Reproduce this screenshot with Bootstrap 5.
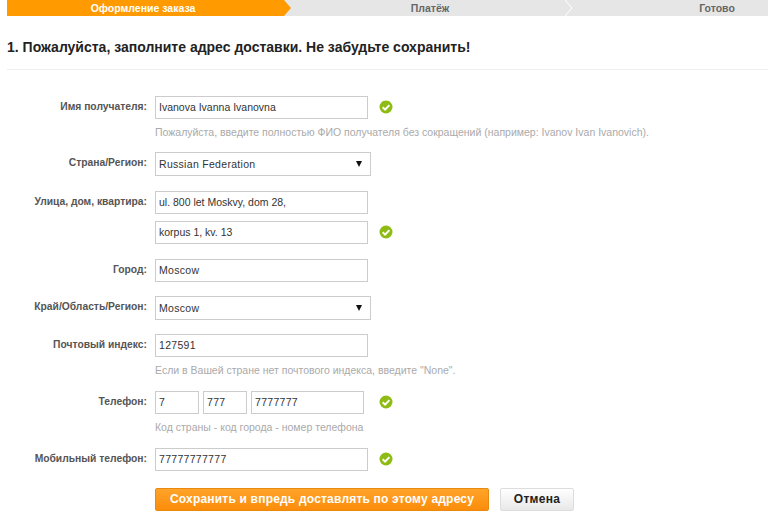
<!DOCTYPE html>
<html lang="ru"><head><meta charset="utf-8"><title>Оформление заказа</title>
<link href="https://cdn.jsdelivr.net/npm/bootstrap@5.3.0/dist/css/bootstrap.min.css" rel="stylesheet">
<style>
html,body{height:521px;overflow:hidden}
body{font-family:"Liberation Sans",Arial,sans-serif;font-size:10.300px;color:#333;background:#fff}
.steps{margin-left:7px;height:16px;background:#e6e6e6;color:#666;font-weight:700;font-size:10.500px;line-height:16px}
.step{position:relative;text-align:center}
.step-a{width:276px;background:#ff9a00;color:#fff;padding-right:4px}
.step-a svg{position:absolute;left:100%;top:0}
.step-b{width:289px;padding-left:5px}
.step-c{flex:1;padding-left:94px}
.step-sep{position:absolute;top:0;left:281px}
.title{margin:17px 0 0 7px;font-size:14px;font-weight:700;line-height:28px;color:#222}
.rule{margin:8px 0 26px 7px;border-top:1px solid #eee}
.frow{margin-bottom:14px}
.frow.wide{margin-bottom:15px}
.frow.tight{margin-bottom:7px}
.flabel{width:147px;margin:-2px 8px 0 0;text-align:right;font-weight:700;color:#555;line-height:22px;flex:none}
.finput.form-control,.fselect.form-select{height:23px;border:1px solid #ccc;border-radius:0;padding:0 3px;font-size:10.500px;color:#333;box-shadow:none;letter-spacing:.3px}
.finput.form-control{width:213px;padding-bottom:1px}
.finput.form-control.snug{letter-spacing:0}
.fselect.form-select{width:216px;height:24px;padding-top:1px;background-image:url("data:image/svg+xml,%3Csvg xmlns='http://www.w3.org/2000/svg' width='6' height='6'%3E%3Cpath d='M0 0h6L3 6z' fill='%23111'/%3E%3C/svg%3E");background-size:6px 6px;background-position:right 8px center;padding-right:14px}
.w1.form-control{width:44px}
.w3.form-control{width:113px}
.okmark{margin:-2px 0 0 11px;flex:none}
.okmark.near{margin-left:15px}
.hint{margin:7px 0 0 155px;color:#aaa;line-height:13px;font-size:10.500px}
.hintrow{margin-bottom:14px}
.hintrow.first{margin-bottom:13px}
.btn-save{width:334px;height:23px;padding:0;border:1px solid #e98a10;border-radius:2px;background:linear-gradient(#ffa42a,#fc8c0a);color:#fff;font-size:12px;font-weight:700;letter-spacing:.2px;line-height:21px}
.btn-cancel{width:74px;height:23px;padding:0;margin-left:11px;border:1px solid #ddd;border-radius:2px;background:linear-gradient(#fff,#e8e8e8);color:#222;font-size:12px;font-weight:700;letter-spacing:.3px;line-height:21px}
.actions{margin-left:155px;margin-top:17px}
.gap4{gap:4px}
</style></head><body>
<svg width="0" height="0" class="position-absolute"><defs><g id="ok"><circle cx="7" cy="7" r="6.500" fill="#8fbc14"/><path d="M3.700 7.200l2.400 2.400 4.300-4.500" fill="none" stroke="#fff" stroke-width="2"/></g></defs></svg>
<div class="steps d-flex">
  <div class="step step-a">Оформление заказа<svg width="8" height="16"><path d="M0 0h1l7 8-7 8H0z" fill="#ff9a00"/></svg></div>
  <div class="step step-b">Платёж<svg class="step-sep" width="9" height="16"><path d="M1 0l7 8-7 8" fill="none" stroke="#fff"/></svg></div>
  <div class="step step-c">Готово</div>
</div>
<h1 class="title">1. Пожалуйста, заполните адрес доставки. Не забудьте сохранить!</h1>
<div class="rule"></div>
<form>
  <div class="hintrow first">
    <div class="d-flex align-items-center"><label class="flabel">Имя получателя:</label><input class="finput form-control snug" value="Ivanova Ivanna Ivanovna"><svg class="okmark" width="14" height="14"><use href="#ok"/></svg></div>
    <p class="hint">Пожалуйста, введите полностью ФИО получателя без сокращений (например: Ivanov Ivan Ivanovich).</p>
  </div>
  <div class="frow wide d-flex align-items-center"><label class="flabel">Страна/Регион:</label><select class="fselect form-select"><option>Russian Federation</option></select></div>
  <div class="frow tight d-flex align-items-center"><label class="flabel">Улица, дом, квартира:</label><input class="finput form-control snug" value="ul. 800 let Moskvy, dom 28,"></div>
  <div class="frow wide d-flex align-items-center"><span class="flabel"></span><input class="finput form-control snug" value="korpus 1, kv. 13"><svg class="okmark" width="14" height="14"><use href="#ok"/></svg></div>
  <div class="frow d-flex align-items-center"><label class="flabel">Город:</label><input class="finput form-control" value="Moscow"></div>
  <div class="frow d-flex align-items-center"><label class="flabel">Край/Область/Регион:</label><select class="fselect form-select"><option>Moscow</option></select></div>
  <div class="hintrow">
    <div class="d-flex align-items-center"><label class="flabel">Почтовый индекс:</label><input class="finput form-control" value="127591"></div>
    <p class="hint">Если в Вашей стране нет почтового индекса, введите "None".</p>
  </div>
  <div class="hintrow">
    <div class="d-flex align-items-center"><label class="flabel">Телефон:</label><div class="d-flex gap4"><input class="finput form-control w1" value="7"><input class="finput form-control w1" value="777"><input class="finput form-control w3" value="7777777"></div><svg class="okmark near" width="14" height="14"><use href="#ok"/></svg></div>
    <p class="hint">Код страны - код города - номер телефона</p>
  </div>
  <div class="d-flex align-items-center"><label class="flabel">Мобильный телефон:</label><input class="finput form-control" value="77777777777"><svg class="okmark" width="14" height="14"><use href="#ok"/></svg></div>
  <div class="actions d-flex"><button type="button" class="btn btn-save">Сохранить и впредь доставлять по этому адресу</button><button type="button" class="btn btn-cancel">Отмена</button></div>
</form>
<script src="https://cdn.jsdelivr.net/npm/bootstrap@5.3.0/dist/js/bootstrap.bundle.min.js"></script>
</body></html>
